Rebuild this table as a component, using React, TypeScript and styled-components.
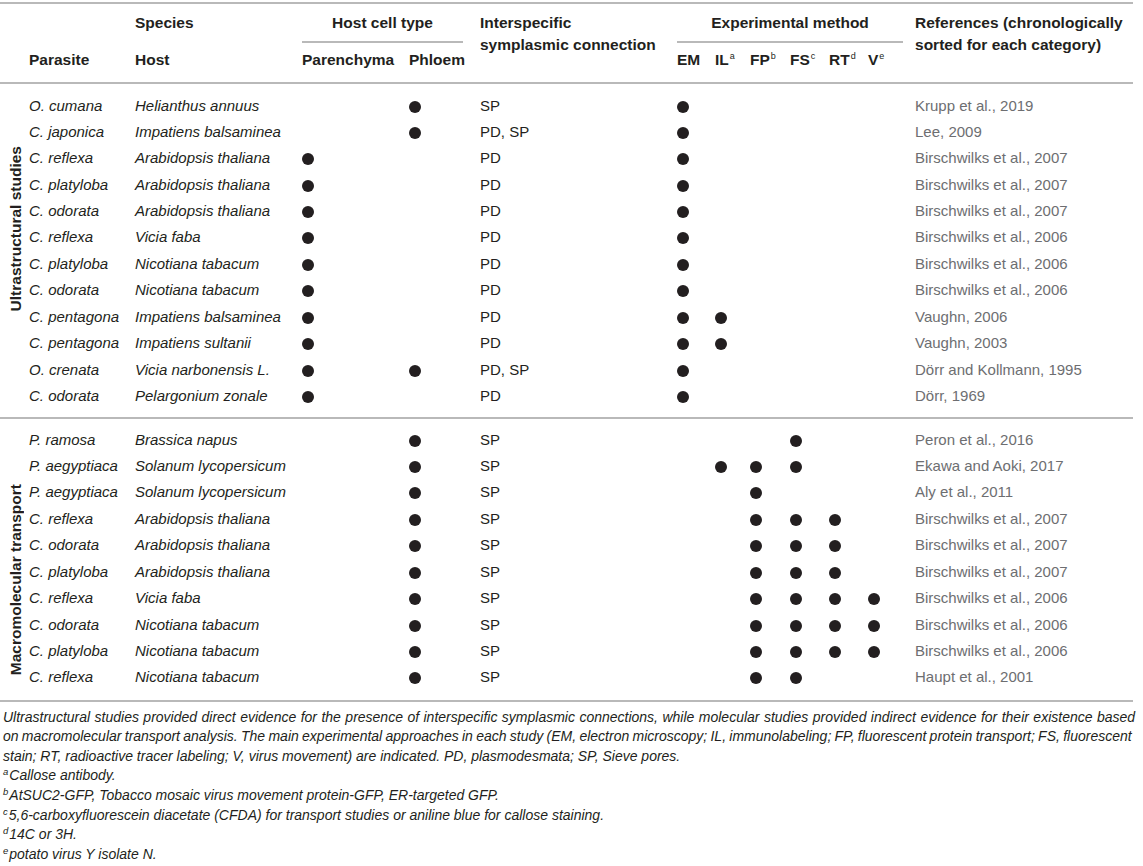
import styled, { createGlobalStyle } from "styled-components";

const GlobalStyle = createGlobalStyle`
  html, body {
    margin: 0;
    padding: 0;
    background: #ffffff;
  }
  body {
    font-family: "Liberation Sans", Arial, Helvetica, sans-serif;
    color: #231f20;
  }
`;

const Page = styled.div`
  width: 1143px;
  padding-top: 2px;
`;

const Table = styled.table`
  width: 1133px;
  table-layout: fixed;
  border-collapse: collapse;
  font-size: 15px;
`;

const Head = styled.thead`
  border-top: 2px solid #b9b9b9;
  border-bottom: 2px solid #b9b9b9;
`;

const Group = styled.tbody`
  border-bottom: 2px solid #b9b9b9;
`;

const HeadRow = styled.tr<{ $h: number }>`
  height: ${(p) => p.$h}px;
`;

const HeadCell = styled.th<{ $top?: number }>`
  padding: ${(p) => p.$top ?? 9}px 0 0 0;
  font-weight: 700;
  font-size: 15.5px;
  line-height: 18px;
  text-align: left;
  vertical-align: top;
  color: #231f20;
`;

const TallHeadCell = styled(HeadCell)`
  line-height: 22px;
`;

const SpanHeadCell = styled(HeadCell)<{ $gap: number }>`
  text-align: center;
  padding-right: ${(p) => p.$gap}px;
`;

const SpanTitle = styled.div`
  padding-bottom: 9px;
  border-bottom: 2px solid #b9b9b9;
`;

const Sup = styled.sup`
  font-size: 9px;
  font-weight: 400;
  vertical-align: 6px;
  line-height: 0;
  margin-left: 1px;
`;

const Row = styled.tr<{ $pad?: "top" | "bottom"; $space: number }>`
  height: ${(p) => 26.45 + (p.$pad ? p.$space : 0)}px;
`;

const Cell = styled.td<{ $pad?: "top" | "bottom"; $space: number; $kind?: "species" | "ref" }>`
  padding: ${(p) => (p.$pad === "top" ? p.$space : 0)}px 0
    ${(p) => (p.$pad === "bottom" ? p.$space : 0)}px 0;
  line-height: 18px;
  vertical-align: middle;
  white-space: nowrap;
  font-style: ${(p) => (p.$kind === "species" ? "italic" : "normal")};
  color: ${(p) => (p.$kind === "ref" ? "#6d6e71" : "#231f20")};
`;

// shift moves the rotated label off the group's centre, as in the source table
const LabelCell = styled.td<{ $shift: number }>`
  padding: ${(p) => (p.$shift > 0 ? p.$shift * 2 : 0)}px 0
    ${(p) => (p.$shift < 0 ? -p.$shift * 2 : 0)}px 2px;
  vertical-align: middle;
  text-align: center;
`;

const SideLabel = styled.span`
  display: inline-block;
  writing-mode: vertical-rl;
  transform: rotate(180deg);
  font-weight: 700;
  font-size: 15.5px;
  line-height: 18px;
  white-space: nowrap;
`;

const Dot = styled.span`
  display: inline-block;
  width: 12px;
  height: 12px;
  border-radius: 50%;
  background: #231f20;
  vertical-align: middle;
`;

const Caption = styled.div`
  margin-top: 6px;
  padding: 0 4px 0 3px;
  font-style: italic;
  font-size: 14px;
  line-height: 19.6px;
  color: #231f20;
`;

const Line = styled.div<{ $spread?: number }>`
  white-space: nowrap;
  word-spacing: ${(p) => p.$spread ?? 0}px;
`;

const NoteMark = styled.sup`
  font-size: 9.5px;
  vertical-align: 5px;
  line-height: 0;
  margin-right: 1px;
`;

type Method = "EM" | "IL" | "FP" | "FS" | "RT" | "V";

interface Study {
  parasite: string;
  host: string;
  par?: boolean;
  phl?: boolean;
  link: string;
  methods: Method[];
  ref: string;
}

const methodCols: Method[] = ["EM", "IL", "FP", "FS", "RT", "V"];

const ultrastructural: Study[] = [
  { parasite: "O. cumana", host: "Helianthus annuus", phl: true, link: "SP", methods: ["EM"], ref: "Krupp et al., 2019" },
  { parasite: "C. japonica", host: "Impatiens balsaminea", phl: true, link: "PD, SP", methods: ["EM"], ref: "Lee, 2009" },
  { parasite: "C. reflexa", host: "Arabidopsis thaliana", par: true, link: "PD", methods: ["EM"], ref: "Birschwilks et al., 2007" },
  { parasite: "C. platyloba", host: "Arabidopsis thaliana", par: true, link: "PD", methods: ["EM"], ref: "Birschwilks et al., 2007" },
  { parasite: "C. odorata", host: "Arabidopsis thaliana", par: true, link: "PD", methods: ["EM"], ref: "Birschwilks et al., 2007" },
  { parasite: "C. reflexa", host: "Vicia faba", par: true, link: "PD", methods: ["EM"], ref: "Birschwilks et al., 2006" },
  { parasite: "C. platyloba", host: "Nicotiana tabacum", par: true, link: "PD", methods: ["EM"], ref: "Birschwilks et al., 2006" },
  { parasite: "C. odorata", host: "Nicotiana tabacum", par: true, link: "PD", methods: ["EM"], ref: "Birschwilks et al., 2006" },
  { parasite: "C. pentagona", host: "Impatiens balsaminea", par: true, link: "PD", methods: ["EM", "IL"], ref: "Vaughn, 2006" },
  { parasite: "C. pentagona", host: "Impatiens sultanii", par: true, link: "PD", methods: ["EM", "IL"], ref: "Vaughn, 2003" },
  { parasite: "O. crenata", host: "Vicia narbonensis L.", par: true, phl: true, link: "PD, SP", methods: ["EM"], ref: "Dörr and Kollmann, 1995" },
  { parasite: "C. odorata", host: "Pelargonium zonale", par: true, link: "PD", methods: ["EM"], ref: "Dörr, 1969" },
];

const macromolecular: Study[] = [
  { parasite: "P. ramosa", host: "Brassica napus", phl: true, link: "SP", methods: ["FS"], ref: "Peron et al., 2016" },
  { parasite: "P. aegyptiaca", host: "Solanum lycopersicum", phl: true, link: "SP", methods: ["IL", "FP", "FS"], ref: "Ekawa and Aoki, 2017" },
  { parasite: "P. aegyptiaca", host: "Solanum lycopersicum", phl: true, link: "SP", methods: ["FP"], ref: "Aly et al., 2011" },
  { parasite: "C. reflexa", host: "Arabidopsis thaliana", phl: true, link: "SP", methods: ["FP", "FS", "RT"], ref: "Birschwilks et al., 2007" },
  { parasite: "C. odorata", host: "Arabidopsis thaliana", phl: true, link: "SP", methods: ["FP", "FS", "RT"], ref: "Birschwilks et al., 2007" },
  { parasite: "C. platyloba", host: "Arabidopsis thaliana", phl: true, link: "SP", methods: ["FP", "FS", "RT"], ref: "Birschwilks et al., 2007" },
  { parasite: "C. reflexa", host: "Vicia faba", phl: true, link: "SP", methods: ["FP", "FS", "RT", "V"], ref: "Birschwilks et al., 2006" },
  { parasite: "C. odorata", host: "Nicotiana tabacum", phl: true, link: "SP", methods: ["FP", "FS", "RT", "V"], ref: "Birschwilks et al., 2006" },
  { parasite: "C. platyloba", host: "Nicotiana tabacum", phl: true, link: "SP", methods: ["FP", "FS", "RT", "V"], ref: "Birschwilks et al., 2006" },
  { parasite: "C. reflexa", host: "Nicotiana tabacum", phl: true, link: "SP", methods: ["FP", "FS"], ref: "Haupt et al., 2001" },
];

const colWidths = [29, 106, 167, 107, 71, 197, 38, 35, 40, 39, 39, 47, 218];

const StudyGroup = ({
  label,
  rows,
  top,
  bottom,
  shift,
}: {
  label: string;
  rows: Study[];
  top: number;
  bottom: number;
  shift: number;
}) => (
  <Group>
    {rows.map((s, i) => {
      const pad = i === 0 ? "top" : i === rows.length - 1 ? "bottom" : undefined;
      const space = pad === "top" ? top : bottom;
      return (
        <Row key={i} $pad={pad} $space={space}>
          {i === 0 && (
            <LabelCell rowSpan={rows.length} $shift={shift}>
              <SideLabel>{label}</SideLabel>
            </LabelCell>
          )}
          <Cell $pad={pad} $space={space} $kind="species">{s.parasite}</Cell>
          <Cell $pad={pad} $space={space} $kind="species">{s.host}</Cell>
          <Cell $pad={pad} $space={space}>{s.par && <Dot />}</Cell>
          <Cell $pad={pad} $space={space}>{s.phl && <Dot />}</Cell>
          <Cell $pad={pad} $space={space}>{s.link}</Cell>
          {methodCols.map((m) => (
            <Cell key={m} $pad={pad} $space={space}>
              {s.methods.includes(m) && <Dot />}
            </Cell>
          ))}
          <Cell $pad={pad} $space={space} $kind="ref">{s.ref}</Cell>
        </Row>
      );
    })}
  </Group>
);

const App = () => {
  return (
    <Page>
      <GlobalStyle />
      <Table>
        <colgroup>
          {colWidths.map((w, i) => (
            <col key={i} style={{ width: w }} />
          ))}
        </colgroup>
        <Head>
          <HeadRow $h={39}>
            <HeadCell rowSpan={2} />
            <HeadCell />
            <HeadCell $top={10}>Species</HeadCell>
            <SpanHeadCell colSpan={2} $gap={17} $top={10}>
              <SpanTitle>Host cell type</SpanTitle>
            </SpanHeadCell>
            <TallHeadCell rowSpan={2} $top={8}>
              Interspecific
              <br />
              symplasmic connection
            </TallHeadCell>
            <SpanHeadCell colSpan={6} $gap={12} $top={10}>
              <SpanTitle>Experimental method</SpanTitle>
            </SpanHeadCell>
            <TallHeadCell rowSpan={2} $top={8}>
              References (chronologically
              <br />
              sorted for each category)
            </TallHeadCell>
          </HeadRow>
          <HeadRow $h={40}>
            <HeadCell $top={8}>Parasite</HeadCell>
            <HeadCell $top={8}>Host</HeadCell>
            <HeadCell $top={8}>Parenchyma</HeadCell>
            <HeadCell $top={8}>Phloem</HeadCell>
            <HeadCell $top={8}>EM</HeadCell>
            <HeadCell $top={8}>
              IL<Sup>a</Sup>
            </HeadCell>
            <HeadCell $top={8}>
              FP<Sup>b</Sup>
            </HeadCell>
            <HeadCell $top={8}>
              FS<Sup>c</Sup>
            </HeadCell>
            <HeadCell $top={8}>
              RT<Sup>d</Sup>
            </HeadCell>
            <HeadCell $top={8}>
              V<Sup>e</Sup>
            </HeadCell>
          </HeadRow>
        </Head>
        <StudyGroup label="Ultrastructural studies" rows={ultrastructural} top={9} bottom={9} shift={-20} />
        <StudyGroup label="Macromolecular transport" rows={macromolecular} top={8} bottom={10} shift={22} />
      </Table>
      <Caption>
        <Line $spread={0.55}>
          Ultrastructural studies provided direct evidence for the presence of interspecific symplasmic
          connections, while molecular studies provided indirect evidence for their existence based
        </Line>
        <Line $spread={-0.6}>
          on macromolecular transport analysis. The main experimental approaches in each study (EM, electron
          microscopy; IL, immunolabeling; FP, fluorescent protein transport; FS, fluorescent
        </Line>
        <Line>
          stain; RT, radioactive tracer labeling; V, virus movement) are indicated. PD, plasmodesmata; SP, Sieve
          pores.
        </Line>
        <Line>
          <NoteMark>a</NoteMark>Callose antibody.
        </Line>
        <Line>
          <NoteMark>b</NoteMark>AtSUC2-GFP, Tobacco mosaic virus movement protein-GFP, ER-targeted GFP.
        </Line>
        <Line>
          <NoteMark>c</NoteMark>5,6-carboxyfluorescein diacetate (CFDA) for transport studies or aniline blue for
          callose staining.
        </Line>
        <Line>
          <NoteMark>d</NoteMark>14C or 3H.
        </Line>
        <Line>
          <NoteMark>e</NoteMark>potato virus Y isolate N.
        </Line>
      </Caption>
    </Page>
  );
};

export default App;
